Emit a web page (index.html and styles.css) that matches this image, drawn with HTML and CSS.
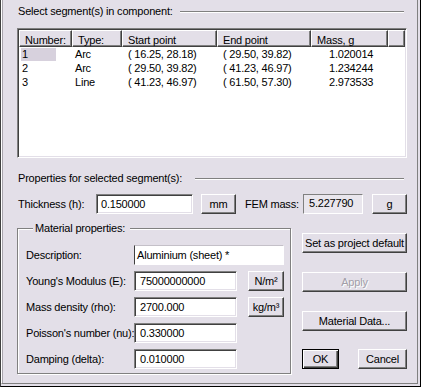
FILE: index.html
```html
<!DOCTYPE html>
<html lang="en">
<head>
<meta charset="utf-8">
<title>Segment properties</title>
<link rel="stylesheet" href="styles.css">
</head>
<body>
<div class="window">
  <div class="panel">
    <div class="sect sect-seg">
      <span class="sect-label">Select segment(s) in component:</span>
      <span class="etch"></span>
    </div>

    <div class="listbox">
      <div class="lv-head">
        <div class="hcell c-num">Number:</div>
        <div class="hcell c-type">Type:</div>
        <div class="hcell c-start">Start point</div>
        <div class="hcell c-end">End point</div>
        <div class="hcell c-mass">Mass, g</div>
        <div class="hcell c-fill"></div>
      </div>
      <div class="lv-row">
        <div class="cell c-num"><span class="sel">1</span></div>
        <div class="cell c-type">Arc</div>
        <div class="cell c-start">( 16.25, 28.18)</div>
        <div class="cell c-end">( 29.50, 39.82)</div>
        <div class="cell c-mass">1.020014</div>
      </div>
      <div class="lv-row">
        <div class="cell c-num"><span class="nosel">2</span></div>
        <div class="cell c-type">Arc</div>
        <div class="cell c-start">( 29.50, 39.82)</div>
        <div class="cell c-end">( 41.23, 46.97)</div>
        <div class="cell c-mass">1.234244</div>
      </div>
      <div class="lv-row">
        <div class="cell c-num"><span class="nosel">3</span></div>
        <div class="cell c-type">Line</div>
        <div class="cell c-start">( 41.23, 46.97)</div>
        <div class="cell c-end">( 61.50, 57.30)</div>
        <div class="cell c-mass">2.973533</div>
      </div>
    </div>

    <div class="sect sect-props">
      <span class="sect-label">Properties for selected segment(s):</span>
      <span class="etch"></span>
    </div>

    <div class="thick-row">
      <span class="lbl-thick">Thickness (h):</span>
      <span class="input in-thick">0.150000</span>
      <button type="button" class="btn btn-mm">mm</button>
      <span class="lbl-fem">FEM mass:</span>
      <span class="readout">5.227790</span>
      <button type="button" class="btn btn-g">g</button>
    </div>

    <div class="lower">
      <fieldset class="group">
        <legend class="legend">Material properties:</legend>
        <div class="grow grow-first">
          <span class="glabel">Description:</span>
          <span class="input in-desc">Aluminium (sheet) *</span>
        </div>
        <div class="grow">
          <span class="glabel">Young's Modulus (E):</span>
          <span class="input in-num">75000000000</span>
          <button type="button" class="btn btn-unit">N/m²</button>
        </div>
        <div class="grow">
          <span class="glabel">Mass density (rho):</span>
          <span class="input in-num">2700.000</span>
          <button type="button" class="btn btn-unit">kg/m³</button>
        </div>
        <div class="grow">
          <span class="glabel">Poisson's number (nu):</span>
          <span class="input in-num">0.330000</span>
        </div>
        <div class="grow">
          <span class="glabel">Damping (delta):</span>
          <span class="input in-num">0.010000</span>
        </div>
      </fieldset>

      <div class="side">
        <button type="button" class="btn btn-wide btn-default-proj">Set as project default</button>
        <button type="button" class="btn btn-wide btn-apply" disabled>Apply</button>
        <button type="button" class="btn btn-wide btn-matdata">Material Data...</button>
        <div class="side-ok">
          <button type="button" class="btn btn-ok">OK</button>
          <button type="button" class="btn btn-cancel">Cancel</button>
        </div>
      </div>
    </div>
  </div>
</div>
</body>
</html>
```

FILE: styles.css
```css
* {
  box-sizing: border-box;
}

html,
body {
  margin: 0;
  padding: 0;
}

body {
  background: #e3dfe8;
  color: #000;
  font-family: "Liberation Sans", Arial, sans-serif;
  font-size: 11px;
  line-height: 13px;
  letter-spacing: -0.2px;
}

.window {
  width: 421px;
  height: 387px;
  background: #e3dfe8;
  border-left: 1px solid #404040;
  border-right: 1px solid #000;
  border-bottom: 1px solid #000;
}

.panel {
  height: 384px;
  margin-right: 2px;
  border-left: 1px solid #fff;
  border-right: 1px solid #808080;
  border-bottom: 1px solid #808080;
  padding: 5px 10px 0 15px;
  box-shadow: inset 1px 0 #a8a4ac;
}

/* section titles with etched rule */
.sect {
  display: flex;
  height: 13px;
}

.sect-label {
  flex: none;
  padding-left: 1px;
  white-space: nowrap;
}

.sect-seg .sect-label {
  width: 163px;
}

.sect-props {
  margin-top: 14px;
}

.sect-props .sect-label {
  width: 178px;
}

.etch {
  flex: 1;
  height: 2px;
  margin-top: 6px;
  margin-right: 3px;
  border-top: 1px solid #808080;
  border-bottom: 1px solid #fff;
}

/* list view */
.listbox {
  margin-top: 10px;
  height: 130px;
  padding: 1px;
  background: #fff;
  border: 1px solid;
  border-color: #808080 #fff #fff #808080;
  box-shadow: inset 1px 1px #404040, inset -1px -1px #e3dfe8;
}

.lv-head {
  display: flex;
  height: 17px;
}

.hcell {
  flex: none;
  height: 17px;
  padding: 3px 0 0 5px;
  background: #e3dfe8;
  border-left: 1px solid #fff;
  border-top: 1px solid #fff;
  border-right: 1px solid #404040;
  border-bottom: 1px solid #404040;
  box-shadow: inset -1px -1px #808080;
  white-space: nowrap;
  overflow: hidden;
}

.c-num { width: 53px; }
.c-type { width: 50px; }
.c-start { width: 95px; }
.c-end { width: 94px; }
.c-mass { width: 77px; }
.c-fill { width: 17px; }

.lv-row {
  display: flex;
  height: 14px;
  line-height: 14px;
}

.cell {
  flex: none;
  white-space: nowrap;
}

.lv-row .c-num {
  padding: 1px 0 0 2px;
}

.sel,
.nosel {
  display: block;
  width: 35px;
  height: 13px;
  line-height: 13px;
  padding-left: 1px;
}

.sel {
  background: #d7d1dd;
}

.lv-row .c-type { padding-left: 3px; }
.lv-row .c-start { padding-left: 6px; }
.lv-row .c-end { padding-left: 6px; }
.lv-row .c-mass { padding-left: 18px; }

/* thickness row */
.thick-row {
  display: flex;
  align-items: center;
  height: 20px;
  margin-top: 9px;
}

.lbl-thick {
  flex: none;
  width: 79px;
  padding-left: 1px;
  white-space: nowrap;
}

.input {
  flex: none;
  display: block;
  height: 20px;
  line-height: 18px;
  padding: 0 3px 0 4px;
  background: #fff;
  border: 1px solid;
  border-color: #808080 #fff #fff #808080;
  box-shadow: inset 1px 1px #404040, inset -1px -1px #e3dfe8;
  white-space: nowrap;
  overflow: hidden;
}

.in-thick {
  width: 97px;
}

.btn {
  flex: none;
  display: block;
  height: 20px;
  margin: 0;
  padding: 0;
  font: inherit;
  letter-spacing: inherit;
  line-height: 18px;
  color: #000;
  text-align: center;
  white-space: nowrap;
  background: #e3dfe8;
  border: 1px solid;
  border-color: #fff #404040 #404040 #fff;
  border-radius: 0;
  box-shadow: inset -1px -1px #808080;
}

.btn-mm {
  width: 35px;
  margin-left: 8px;
}

.lbl-fem {
  flex: none;
  width: 58px;
  margin-left: 9px;
  white-space: nowrap;
}

.readout {
  flex: none;
  display: block;
  width: 60px;
  height: 20px;
  line-height: 16px;
  padding-left: 5px;
  background: #e9e6ed;
  border: 1px solid;
  border-color: #808080 #fff #fff #808080;
  white-space: nowrap;
}

.btn-g {
  width: 35px;
  margin-left: 9px;
}

/* lower area */
.lower {
  display: flex;
  margin-top: 8px;
}

.group {
  flex: none;
  width: 274px;
  min-width: 0;
  margin: 0;
  padding: 0 0 4px 8px;
  border: 1px solid #808080;
  box-shadow: inset 1px 1px #fff, 1px 1px #fff;
}

.legend {
  margin-left: 7px;
  padding: 0 5px 0 2px;
  line-height: 13px;
  background: #e3dfe8;
  white-space: nowrap;
}

.grow {
  display: flex;
  align-items: center;
  height: 20px;
  margin-top: 6px;
}

.grow-first {
  margin-top: 10px;
}

.glabel {
  flex: none;
  width: 108px;
  white-space: nowrap;
}

.in-desc {
  width: 150px;
  padding-left: 2px;
  border-color: #c4c0c8 #fff #fff #404040;
  box-shadow: none;
}

.in-num {
  width: 103px;
  padding-left: 5px;
}

.btn-unit {
  width: 36px;
  margin-left: 11px;
}

.side {
  flex: none;
  width: 105px;
  margin-left: 11px;
  display: flex;
  flex-direction: column;
}

.btn-wide {
  width: 105px;
}

.btn-default-proj {
  margin-top: 11px;
}

.btn-apply {
  margin-top: 19px;
  color: #a29ea8;
  text-shadow: 1px 1px #fff;
}

.btn-matdata {
  margin-top: 19px;
}

.side-ok {
  display: flex;
  justify-content: space-between;
  margin-top: 18px;
}

.btn-ok {
  width: 37px;
  border: 1px solid #000;
  box-shadow: inset 1px 1px #fff, inset -1px -1px #404040, inset -2px -2px #808080;
}

.btn-cancel {
  width: 49px;
}
```
